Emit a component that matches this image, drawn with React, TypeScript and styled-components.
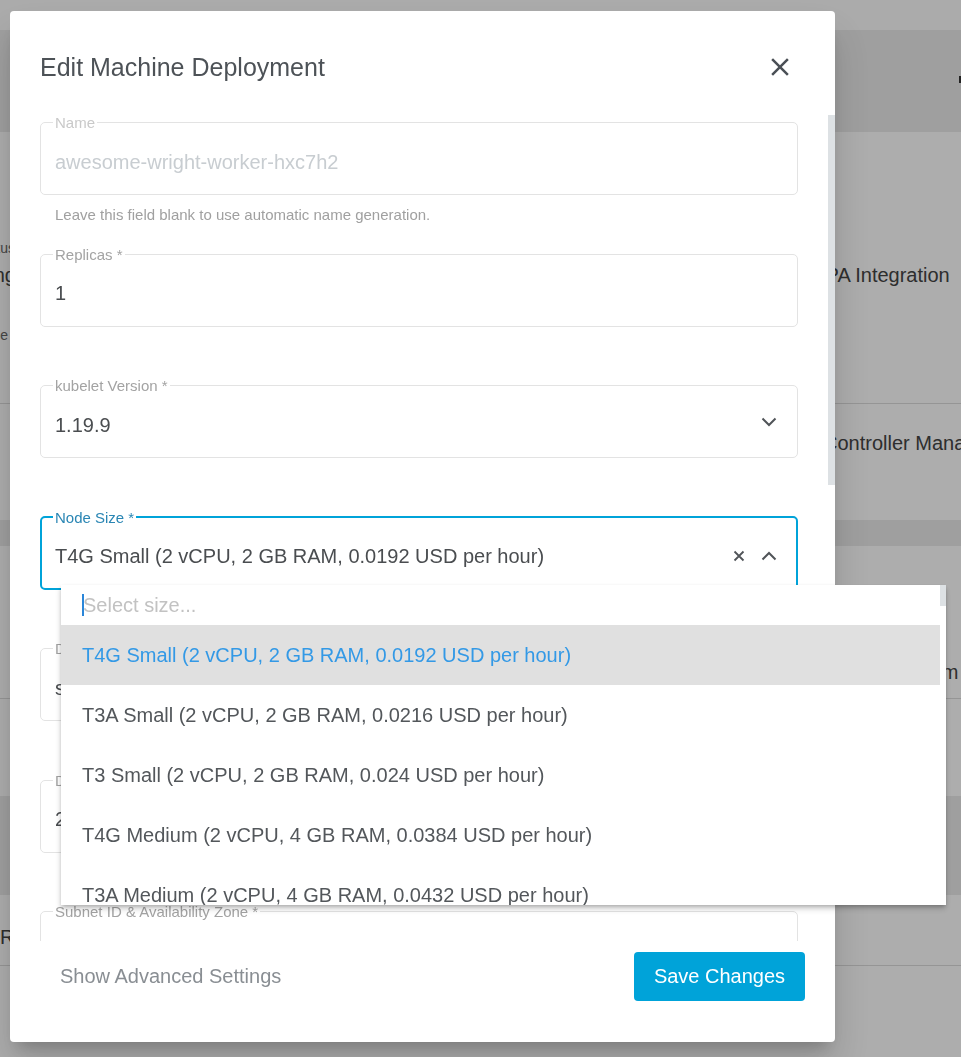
import React from 'react';
import styled, { createGlobalStyle } from 'styled-components';

const GlobalStyle = createGlobalStyle`
  html, body { margin: 0; padding: 0; }
  body {
    font-family: "Liberation Sans", Arial, sans-serif;
    background: #ececec;
    overflow: hidden;
  }
  * { box-sizing: border-box; }
`;

/* ---------- background page ---------- */

const Page = styled.div`
  width: 961px;
  height: 1057px;
  overflow: hidden;
  background: #ebebeb;
  display: flex;
  flex-direction: column;
  color: #444;
`;

const TopBar = styled.div`
  height: 30px;
  flex-shrink: 0;
  background: #fdfdfd;
`;

const HeaderBand = styled.div`
  height: 102px;
  flex-shrink: 0;
  display: flex;
  justify-content: flex-end;
  align-items: flex-start;
  padding-top: 46px;
`;

const EdgeMark = styled.span`
  width: 2px;
  height: 7px;
  background: #333;
`;

const Card = styled.div`
  flex-shrink: 0;
  background: #ffffff;
  display: flex;
  flex-direction: column;
`;

const Gap = styled.div<{ $h: number }>`
  height: ${(p) => p.$h}px;
  flex-shrink: 0;
`;

const CardRow = styled.div<{ $h: number; $line?: boolean }>`
  height: ${(p) => p.$h}px;
  display: grid;
  grid-template-columns: 16px 1fr;
  align-items: start;
  border-bottom: ${(p) => (p.$line ? '1px solid #dcdcdc' : 'none')};
`;

const LeftCell = styled.div<{ $pt: number }>`
  padding-top: ${(p) => p.$pt}px;
  display: flex;
  flex-direction: column;
  align-items: flex-end;
  white-space: nowrap;
`;

const SmallText = styled.span<{ $mt?: number; $pr?: number }>`
  font-size: 14px;
  line-height: 16px;
  color: #666;
  margin-top: ${(p) => p.$mt ?? 0}px;
  padding-right: ${(p) => p.$pr ?? 0}px;
`;

const BigText = styled.span<{ $mt?: number }>`
  font-size: 20px;
  line-height: 23px;
  color: #444;
  margin-top: ${(p) => p.$mt ?? 0}px;
  white-space: nowrap;
`;

const LeadCell = styled.div<{ $pt: number }>`
  padding-top: ${(p) => p.$pt}px;
  font-size: 20px;
  line-height: 23px;
  color: #444;
`;

const RightCell = styled.div<{ $indent: number; $pt: number }>`
  padding-left: ${(p) => p.$indent}px;
  padding-top: ${(p) => p.$pt}px;
  font-size: 20px;
  line-height: 23px;
  color: #444;
  white-space: nowrap;
`;

/* ---------- overlay & dialog ---------- */

const Overlay = styled.div`
  position: fixed;
  inset: 0;
  background: rgba(0, 0, 0, 0.32);
  padding: 11px 0 0 10px;
`;

const Dialog = styled.div`
  position: relative;
  width: 825px;
  height: 1031px;
  background: #fff;
  border-radius: 4px;
  box-shadow: 0 11px 15px -7px rgba(0, 0, 0, 0.2), 0 24px 38px 3px rgba(0, 0, 0, 0.14);
  display: flex;
  flex-direction: column;
`;

const Header = styled.div`
  height: 104px;
  flex-shrink: 0;
  display: flex;
  align-items: center;
  justify-content: space-between;
  padding: 8px 40px 0 30px;
`;

const Title = styled.h2`
  margin: 0;
  font-size: 25px;
  font-weight: 400;
  color: #4d5257;
`;

const CloseButton = styled.button`
  width: 30px;
  height: 30px;
  padding: 0;
  border: none;
  background: none;
  display: flex;
  color: #4a4f55;
`;

const Body = styled.div`
  flex: 1;
  min-height: 0;
  display: flex;
`;

const Content = styled.div`
  flex: 1;
  overflow: hidden;
  padding: 0 30px;
  display: flex;
  flex-direction: column;
`;

const ScrollTrack = styled.div`
  width: 7px;
  flex-shrink: 0;
  display: flex;
  flex-direction: column;
`;

const ScrollThumb = styled.div<{ $h: number }>`
  height: ${(p) => p.$h}px;
  background: #dde1e4;
`;

const FieldBlock = styled.div`
  flex-shrink: 0;
  display: flex;
  flex-direction: column;
`;

const Outline = styled.fieldset<{ $focused?: boolean }>`
  margin: 0;
  min-width: 0;
  height: 80px;
  padding: 0 ${(p) => (p.$focused ? 13 : 14)}px;
  border: ${(p) => (p.$focused ? '2px solid #00a3d9' : '1px solid #e3e3e3')};
  border-radius: 5px;
  display: block;
`;

const Legend = styled.legend<{ $tone: 'muted' | 'normal' | 'focus' }>`
  font-size: 15px;
  line-height: 15px;
  padding: 0 2px;
  margin-left: -2px;
  color: ${(p) => (p.$tone === 'muted' ? '#c9c9c9' : p.$tone === 'focus' ? '#2a86b4' : '#a3a3a3')};
`;

const FieldRow = styled.div<{ $h: number }>`
  height: ${(p) => p.$h}px;
  display: flex;
  align-items: center;
`;

const Value = styled.span<{ $disabled?: boolean }>`
  flex: 1;
  font-size: 20px;
  color: ${(p) => (p.$disabled ? '#c8cdd1' : '#4a4d50')};
  white-space: nowrap;
  overflow: hidden;
`;

const Icons = styled.div<{ $lift?: boolean }>`
  display: flex;
  align-items: center;
  gap: 16px;
  margin-right: 6px;
  margin-bottom: ${(p) => (p.$lift ? 7 : 0)}px;
  color: #505458;
`;

const Subscript = styled.div`
  height: 51.5px;
  padding: 11px 0 0 15px;
  font-size: 15px;
  line-height: 17px;
  color: #a0a0a0;
`;

const Footer = styled.div`
  height: 101px;
  flex-shrink: 0;
  display: flex;
  justify-content: space-between;
  align-items: flex-start;
  padding: 11px 30px 0 30px;
`;

const TextButton = styled.button`
  height: 49px;
  padding: 0 20px;
  border: none;
  background: none;
  font-family: inherit;
  font-size: 20px;
  color: #898e93;
`;

const PrimaryButton = styled.button`
  height: 49px;
  width: 171px;
  border: none;
  border-radius: 4px;
  background: #00a3d9;
  color: #fff;
  font-family: inherit;
  font-size: 20px;
`;

/* ---------- dropdown panel ---------- */

const Panel = styled.div`
  position: absolute;
  left: 51px;
  top: 574px;
  width: 885px;
  height: 320px;
  background: #fff;
  box-shadow: 0 2px 4px -1px rgba(0, 0, 0, 0.25), 0 4px 6px rgba(0, 0, 0, 0.16);
  display: flex;
  overflow: hidden;
`;

const PanelList = styled.div`
  flex: 1;
  display: flex;
  flex-direction: column;
`;

const SearchRow = styled.div`
  height: 40px;
  flex-shrink: 0;
  display: flex;
  align-items: center;
  padding-left: 21px;
  font-size: 20px;
  color: #c2c2c2;
`;

const Caret = styled.span`
  width: 2px;
  height: 22px;
  background: #2a86d9;
  margin-right: -1px;
`;

const Option = styled.div<{ $active?: boolean }>`
  height: 60px;
  flex-shrink: 0;
  display: flex;
  align-items: center;
  padding-left: 21px;
  font-size: 20px;
  white-space: nowrap;
  background: ${(p) => (p.$active ? '#e0e0e0' : '#fff')};
  color: ${(p) => (p.$active ? '#3399e6' : '#53575b')};
`;

const PanelTrack = styled.div`
  width: 6px;
  flex-shrink: 0;
  display: flex;
  flex-direction: column;
`;

const PanelThumb = styled.div`
  height: 21px;
  background: #dde1e4;
`;

const CloseIcon = ({ size }: { size: number }) => (
  <svg width={size} height={size} viewBox="0 0 24 24" fill="currentColor">
    <path d="M19 6.41L17.59 5 12 10.59 6.41 5 5 6.41 10.59 12 5 17.59 6.41 19 12 13.41 17.59 19 19 17.59 13.41 12z" />
  </svg>
);

const Chevron = ({ up }: { up?: boolean }) => (
  <svg width="16" height="10" viewBox="0 0 16 10" fill="none" stroke="currentColor" strokeWidth="2">
    <path d={up ? 'M1.5 8.5L8 2l6.5 6.5' : 'M1.5 1.5L8 8l6.5-6.5'} />
  </svg>
);

const SmallX = () => (
  <svg width="12" height="12" viewBox="0 0 12 12" fill="none" stroke="currentColor" strokeWidth="1.8">
    <path d="M1.5 1.5l9 9M10.5 1.5l-9 9" />
  </svg>
);

type FieldProps = {
  label: string;
  value: string;
  tone?: 'muted' | 'normal' | 'focus';
  disabled?: boolean;
  hint?: string;
  icons?: React.ReactNode;
  liftIcons?: boolean;
};

const Field = ({ label, value, tone = 'normal', disabled, hint, icons, liftIcons }: FieldProps) => (
  <FieldBlock>
    <Outline $focused={tone === 'focus'}>
      <Legend $tone={tone}>{label}</Legend>
      <FieldRow $h={tone === 'focus' ? 63 : 64}>
        <Value $disabled={disabled}>{value}</Value>
        {icons && <Icons $lift={liftIcons}>{icons}</Icons>}
      </FieldRow>
    </Outline>
    <Subscript>{hint}</Subscript>
  </FieldBlock>
);

const sizes = [
  'T4G Small (2 vCPU, 2 GB RAM, 0.0192 USD per hour)',
  'T3A Small (2 vCPU, 2 GB RAM, 0.0216 USD per hour)',
  'T3 Small (2 vCPU, 2 GB RAM, 0.024 USD per hour)',
  'T4G Medium (2 vCPU, 4 GB RAM, 0.0384 USD per hour)',
  'T3A Medium (2 vCPU, 4 GB RAM, 0.0432 USD per hour)',
];

export default function App() {
  return (
    <>
      <GlobalStyle />
      <Page>
        <TopBar />
        <HeaderBand>
          <EdgeMark />
        </HeaderBand>
        <Card>
          <CardRow $h={272} $line>
            <LeftCell $pt={108}>
              <SmallText $pr={1}>Status</SmallText>
              <BigText $mt={8}>Running</BigText>
              <SmallText $mt={40} $pr={8}>Type</SmallText>
            </LeftCell>
            <RightCell $indent={794} $pt={132}>
              OPA Integration
            </RightCell>
          </CardRow>
          <CardRow $h={116}>
            <span />
            <RightCell $indent={807} $pt={28}>
              Controller Manager
            </RightCell>
          </CardRow>
        </Card>
        <Gap $h={26} />
        <Card>
          <CardRow $h={153} $line>
            <span />
            <RightCell $indent={868} $pt={115}>
              Platform
            </RightCell>
          </CardRow>
          <CardRow $h={97}>
            <span />
            <span />
          </CardRow>
        </Card>
        <Gap $h={99} />
        <Card>
          <CardRow $h={71} $line>
            <LeadCell $pt={31}>R</LeadCell>
            <span />
          </CardRow>
          <CardRow $h={100}>
            <span />
            <span />
          </CardRow>
        </Card>
      </Page>

      <Overlay>
        <Dialog>
          <Header>
            <Title>Edit Machine Deployment</Title>
            <CloseButton aria-label="Close">
              <CloseIcon size={30} />
            </CloseButton>
          </Header>
          <Body>
            <Content>
              <Field
                label="Name"
                value="awesome-wright-worker-hxc7h2"
                tone="muted"
                disabled
                hint="Leave this field blank to use automatic name generation."
              />
              <Field label="Replicas *" value="1" />
              <Field label="kubelet Version *" value="1.19.9" icons={<Chevron />} liftIcons />
              <Field
                label="Node Size *"
                value={sizes[0]}
                tone="focus"
                icons={
                  <>
                    <SmallX />
                    <Chevron up />
                  </>
                }
              />
              <Field label="Disk Type *" value="standard" />
              <Field label="Disk Size in GB *" value="25" />
              <Field label="Subnet ID & Availability Zone *" value="" />
            </Content>
            <ScrollTrack>
              <ScrollThumb $h={370} />
            </ScrollTrack>
          </Body>
          <Footer>
            <TextButton>Show Advanced Settings</TextButton>
            <PrimaryButton>Save Changes</PrimaryButton>
          </Footer>

          <Panel>
            <PanelList>
              <SearchRow>
                <Caret />
                Select size...
              </SearchRow>
              {sizes.map((s, i) => (
                <Option key={s} $active={i === 0}>
                  {s}
                </Option>
              ))}
            </PanelList>
            <PanelTrack>
              <PanelThumb />
            </PanelTrack>
          </Panel>
        </Dialog>
      </Overlay>
    </>
  );
}
